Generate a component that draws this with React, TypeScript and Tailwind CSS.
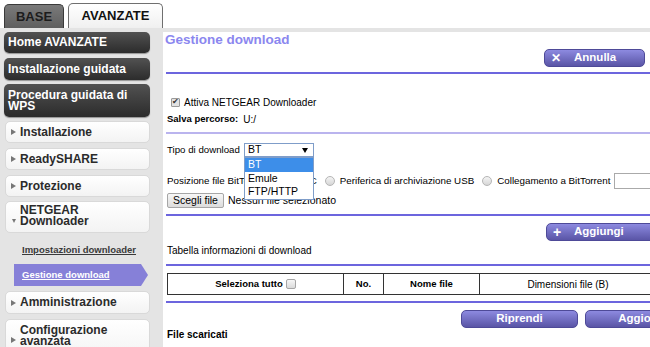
import { twMerge } from 'tailwind-merge'

const DarkItem: React.FC<{ className?: string; children: React.ReactNode }> = ({
	className,
	children,
}) => (
	<div
		className={twMerge(
			'ml-[4px] flex h-[21px] w-[146px] shrink-0 items-center rounded-[5px] bg-linear-to-b from-[#525252] to-[#2c2c2c] pl-[4px] text-[12px] leading-[11px] font-bold text-white shadow-[0_1px_1px_rgba(0,0,0,0.35)]',
			className,
		)}
	>
		{children}
	</div>
)

// two-line items keep the arrow on the last line, like the router page does
const LightItem: React.FC<{
	className?: string
	open?: boolean
	twoLines?: boolean
	children: React.ReactNode
}> = ({ className, open, twoLines, children }) => (
	<div
		className={twMerge(
			'ml-[5px] flex h-[22px] w-[145px] shrink-0 rounded-[5px] border border-[#d9d9d9] bg-linear-to-b from-white to-[#f3f3f3] pl-[4px] text-[12px] leading-[11px] font-bold text-[#2b2b2b]',
			twoLines ? 'items-start pt-[3px]' : 'items-center',
			className,
		)}
	>
		<span className={twMerge('flex w-[10px] shrink-0 items-center', twoLines && 'h-[22px] items-end pb-[4px]')}>
			{open ? (
				<span className="ml-[2px] inline-block h-0 w-0 border-x-[2.5px] border-t-[4px] border-x-transparent border-t-[#777]" />
			) : (
				<span className="ml-[1px] inline-block h-0 w-0 border-y-[3px] border-l-[5px] border-y-transparent border-l-[#777]" />
			)}
		</span>
		<span>{children}</span>
	</div>
)

const PurpleButton: React.FC<{
	className?: string
	icon?: string
	iconWidth?: string
	children: React.ReactNode
}> = ({ className, icon, iconWidth, children }) => (
	<div
		className={twMerge(
			'flex h-[18px] shrink-0 items-center rounded-[5px] border border-[#4e4a98] bg-linear-to-b from-[#8d8ae0] to-[#5a55a6] text-[11.5px] font-bold text-white',
			className,
		)}
	>
		{icon && <span className={twMerge('ml-[6px] w-[23px] text-[12px]', iconWidth)}>{icon}</span>}
		<span className={icon ? '' : 'w-full text-center'}>{children}</span>
	</div>
)

const Radio: React.FC<{ className?: string }> = ({ className }) => (
	<span
		className={twMerge(
			'mr-[5px] ml-[8px] inline-block h-[10px] w-[10px] shrink-0 rounded-full border border-[#b5b5b5] bg-linear-to-b from-[#f4f4f4] to-[#d6d6d6]',
			className,
		)}
	/>
)

const Line: React.FC<{ className?: string }> = ({ className }) => (
	<div className={twMerge('h-[2px] w-full shrink-0 bg-[#6c65de]', className)} />
)

export default function App() {
	return (
		<div className="flex h-[347px] w-[650px] flex-col overflow-hidden bg-white font-['Liberation_Sans',Arial,sans-serif] text-black">
			<div className="flex h-[28px] shrink-0 items-end pl-[4px]">
				<div className="flex h-[24px] w-[60px] items-center justify-center rounded-t-[5px] border border-b-0 border-[#3a3a3a] bg-linear-to-b from-[#7a7a7a] to-[#5f5f5f] text-[13px] font-bold text-[#1c1c1c]">
					BASE
				</div>
				<div className="ml-[4px] flex h-[25px] w-[95px] items-center justify-center rounded-t-[5px] border border-b-0 border-[#6f6f6f] bg-linear-to-b from-white to-[#f0f0f0] text-[13px] font-bold text-[#111]">
					AVANZATE
				</div>
			</div>
			<div className="flex min-h-0 flex-1 border-t-[4px] border-[#e4e4e4]">
				<div className="flex w-[163px] shrink-0 flex-col bg-[#e4e4e4]">
					<DarkItem>Home AVANZATE</DarkItem>
					<DarkItem className="mt-[5px] h-[22px]">Installazione guidata</DarkItem>
					<DarkItem className="mt-[4px] h-[33px]">
						Procedura guidata di
						<br />
						WPS
					</DarkItem>
					<LightItem className="mt-[4px]">Installazione</LightItem>
					<LightItem className="mt-[5px]">ReadySHARE</LightItem>
					<LightItem className="mt-[5px]">Protezione</LightItem>
					<LightItem open twoLines className="mt-[4px] h-[32px]">
						NETGEAR
						<br />
						Downloader
					</LightItem>
					<div className="mt-[10px] h-[14px] shrink-0 pl-[22px] text-[9.5px] leading-[14px] font-bold text-[#3a3a3a] underline">
						Impostazioni downloader
					</div>
					<div className="mt-[7px] flex h-[22px] shrink-0">
						<div className="ml-[14px] flex w-[127px] items-center bg-[#8680d8] pl-[8px] text-[9.5px] font-bold text-white underline">
							Gestione download
						</div>
						<div className="h-0 w-0 border-y-[11px] border-l-[7px] border-y-transparent border-l-[#8680d8]" />
					</div>
					<LightItem className="mt-[5px] h-[23px]">Amministrazione</LightItem>
					<LightItem twoLines className="mt-[5px] h-[40px] pt-[5px]">
						Configurazione
						<br />
						avanzata
					</LightItem>
				</div>

				<div className="flex w-[520px] shrink-0 flex-col pl-[3px]">
					<div className="-ml-[1px] h-[16px] shrink-0 text-[13.5px] leading-[16px] font-bold text-[#8b87ef]">
						Gestione download
					</div>
					<PurpleButton icon="✕" className="mt-[1px] ml-[378px] w-[101px]">
						Annulla
					</PurpleButton>
					<Line className="mt-[5px]" />

					<div className="mt-[22px] flex h-[12px] shrink-0 items-center pl-[5px] text-[10px]">
						<span className="mr-[4px] flex h-[9px] w-[9px] items-center justify-center rounded-[1px] border border-[#9a9a9a] bg-[#e2e2e2] text-[8px] leading-none text-[#333]">
							✔
						</span>
						Attiva NETGEAR Downloader
					</div>
					<div className="mt-[5px] flex h-[12px] shrink-0 items-center pl-[1px] text-[10px]">
						<span className="text-[9.5px] font-bold">Salva percorso:</span>
						<span className="ml-[5px]">U:/</span>
					</div>
					<Line className="mt-[7px] bg-[#bab4ee]" />

					<div className="mt-[9px] flex h-[14px] shrink-0 items-center pl-[1px] text-[9.7px]">
						Tipo di download
						<div className="relative ml-[4px] flex h-[14px] w-[70px] items-center border border-[#7f9dc9] bg-white pl-[3px] text-[10.5px]">
							BT
							<span className="absolute top-[4px] right-[5px] h-0 w-0 border-x-[3px] border-t-[5px] border-x-transparent border-t-black" />
							<div className="absolute top-[13px] left-[-1px] z-10 w-[70px] border border-[#7f9dc9] bg-white text-[10.5px] leading-[13.5px]">
								<div className="bg-[#3d8ee9] pl-[3px] text-white">BT</div>
								<div className="pl-[3px]">Emule</div>
								<div className="pl-[3px]">FTP/HTTP</div>
							</div>
						</div>
					</div>

					<div className="mt-[16px] flex h-[16px] shrink-0 items-center pl-[1px] text-[9.8px] whitespace-nowrap">
						Posizione file BitTorrent:
						<Radio className="ml-[16px]" />
						PC
						<Radio />
						Periferica di archiviazione USB
						<Radio />
						Collegamento a BitTorrent
						<span className="ml-[3px] h-[16px] w-[80px] shrink-0 border border-[#aaa] bg-white" />
					</div>
					<div className="mt-[4px] flex h-[15px] shrink-0 items-center pl-[1px] text-[10.5px] whitespace-nowrap">
						<span className="flex h-[15px] w-[57px] items-center justify-center rounded-[2px] border border-[#a6a6a6] bg-linear-to-b from-[#f7f7f7] to-[#dcdcdc]">
							Scegli file
						</span>
						<span className="ml-[4px]">Nessun file selezionato</span>
					</div>
					<Line className="mt-[6px]" />

					<PurpleButton icon="+" iconWidth="w-[21px] text-[14px]" className="mt-[7px] ml-[380px] w-[110px]">
						Aggiungi
					</PurpleButton>
					<div className="mt-[4px] h-[12px] shrink-0 pl-[1px] text-[10px] leading-[12px]">
						Tabella informazioni di download
					</div>
					<Line className="mt-[7px]" />

					<div className="mt-[7px] ml-[1px] flex h-[22px] w-[490px] shrink-0 border-[1.5px] border-[#333] text-[9.5px]">
						<div className="flex w-[176px] items-center justify-center border-r-[1.5px] border-[#333] font-bold">
							Seleziona tutto
							<span className="ml-[3px] h-[10px] w-[10px] rounded-[2px] border border-[#a5a5a5] bg-linear-to-b from-[#f6f6f6] to-[#dadada]" />
						</div>
						<div className="flex w-[40px] items-center justify-center border-r-[1.5px] border-[#333] font-bold">
							No.
						</div>
						<div className="flex w-[96px] items-center justify-center border-r-[1.5px] border-[#333] font-bold">
							Nome file
						</div>
						<div className="flex flex-1 items-center justify-center text-[10px]">
							Dimensioni file (B)
						</div>
					</div>
					<Line className="mt-[6px]" />

					<div className="mt-[7px] flex shrink-0">
						<PurpleButton className="ml-[295px] w-[117px]">Riprendi</PurpleButton>
						<PurpleButton className="ml-[7px] w-[117px]">Aggiorna</PurpleButton>
					</div>
					<div className="mt-[1px] h-[12px] shrink-0 pl-[1px] text-[10px] leading-[12px] font-bold">
						File scaricati
					</div>
				</div>
			</div>
		</div>
	)
}
